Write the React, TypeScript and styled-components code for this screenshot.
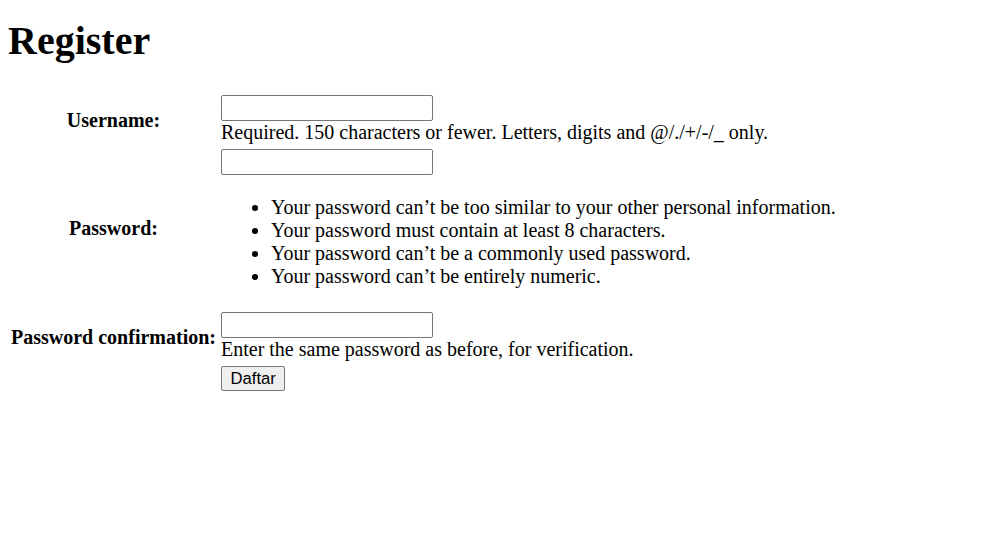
import styled, { createGlobalStyle } from 'styled-components';

const GlobalStyle = createGlobalStyle`
  body {
    margin: 8px;
    background: #fff;
    color: #000;
    font-family: "Liberation Serif", "Times New Roman", serif;
    font-size: 20px;
  }
`;

const passwordRules = [
  'Your password can’t be too similar to your other personal information.',
  'Your password must contain at least 8 characters.',
  'Your password can’t be a commonly used password.',
  'Your password can’t be entirely numeric.',
];

const Title = styled.h1`
  font-size: 40px;
  font-weight: 700;
  line-height: 46px;
  margin: 10px 0 28px;
`;

const Form = styled.form`
  margin: 0;
`;

const FormTable = styled.table`
  border-spacing: 2px;
`;

const Label = styled.th`
  padding: 1px;
  font-weight: 700;
  text-align: center;
  vertical-align: middle;
`;

const Cell = styled.td`
  padding: 1px 1px 2px 2px;
  text-align: left;
  vertical-align: middle;
  line-height: 23px;
`;

const TextInput = styled.input`
  display: inline-block;
  vertical-align: top;
  font-family: "Liberation Sans", Arial, sans-serif;
  font-size: 16.67px;
  width: 212px;
  height: 26px;
  box-sizing: border-box;
  padding: 1px 3px;
  margin: 0;
  border: 1px solid #767676;
  border-radius: 2px;
  background: #fff;
`;

const HelpText = styled.span`
  display: block;
`;

const HelpList = styled.ul`
  margin: 21px 0 19px;
  padding-left: 50px;
`;

const SubmitButton = styled.button`
  display: block;
  font-family: "Liberation Sans", Arial, sans-serif;
  font-size: 16.67px;
  height: 25px;
  margin: 0;
  padding: 0 8.5px;
  border: 1px solid #767676;
  border-radius: 2px;
  background: #efefef;
  color: #000;
`;

export default function App() {
  return (
    <>
      <GlobalStyle />
      <Title>Register</Title>
      <Form onSubmit={(e) => e.preventDefault()}>
        <FormTable>
          <tbody>
            <tr>
              <Label>Username:</Label>
              <Cell>
                <TextInput type="text" name="username" />
                <HelpText>Required. 150 characters or fewer. Letters, digits and @/./+/-/_ only.</HelpText>
              </Cell>
            </tr>
            <tr>
              <Label>Password:</Label>
              <Cell>
                <TextInput type="password" name="password1" />
                <HelpList>
                  {passwordRules.map((rule) => (
                    <li key={rule}>{rule}</li>
                  ))}
                </HelpList>
              </Cell>
            </tr>
            <tr>
              <Label>Password confirmation:</Label>
              <Cell>
                <TextInput type="password" name="password2" />
                <HelpText>Enter the same password as before, for verification.</HelpText>
              </Cell>
            </tr>
            <tr>
              <Cell />
              <Cell>
                <SubmitButton type="submit">Daftar</SubmitButton>
              </Cell>
            </tr>
          </tbody>
        </FormTable>
      </Form>
    </>
  );
}
